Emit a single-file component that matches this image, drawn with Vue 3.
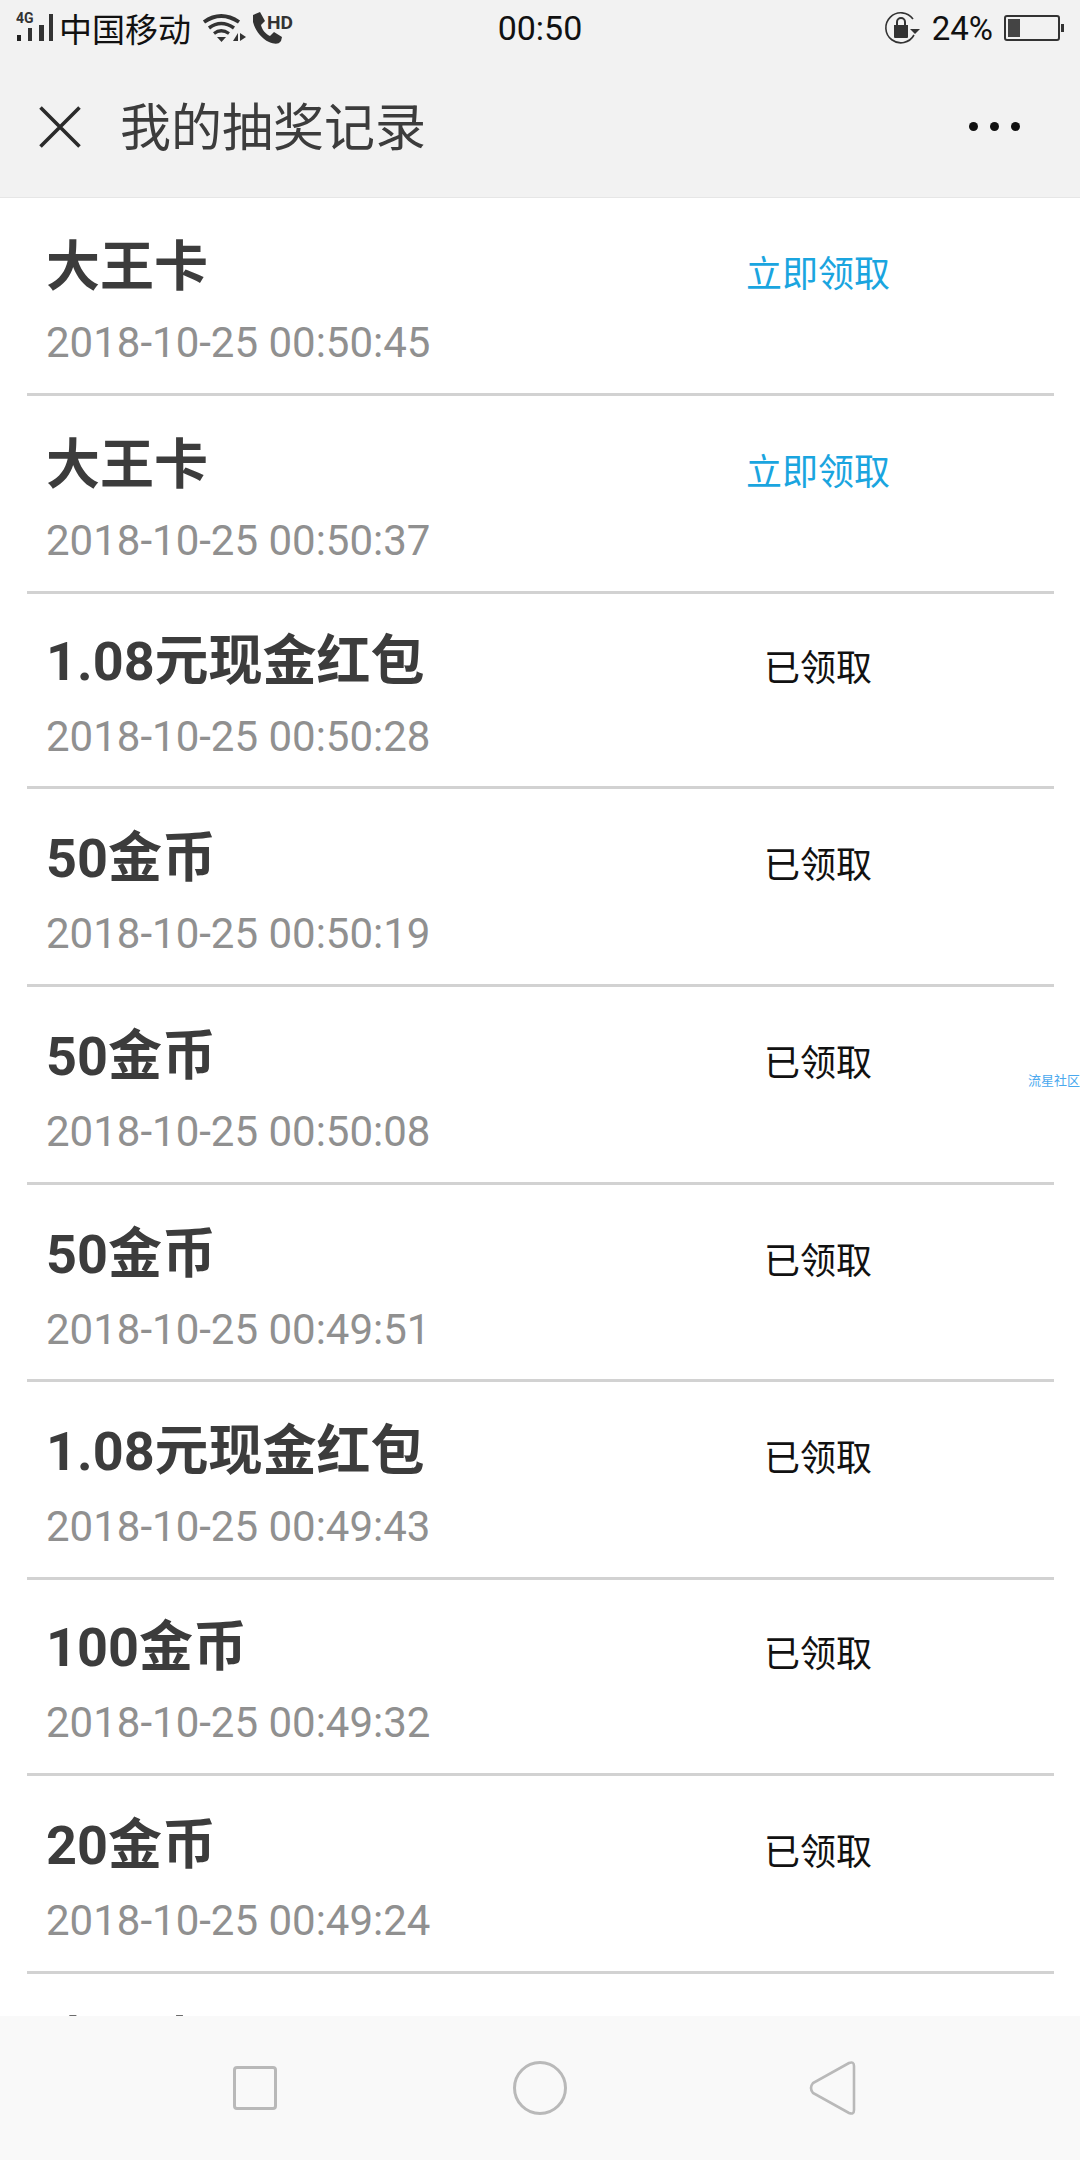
<script setup>
const records = [
  { title: "大王卡", time: "2018-10-25 00:50:45", open: true },
  { title: "大王卡", time: "2018-10-25 00:50:37", open: true },
  { title: "1.08元现金红包", time: "2018-10-25 00:50:28", h: 195 },
  { title: "50金币", time: "2018-10-25 00:50:19" },
  { title: "50金币", time: "2018-10-25 00:50:08" },
  { title: "50金币", time: "2018-10-25 00:49:51", h: 197 },
  { title: "1.08元现金红包", time: "2018-10-25 00:49:43" },
  { title: "100金币", time: "2018-10-25 00:49:32", h: 196 },
  { title: "20金币", time: "2018-10-25 00:49:24" },
  { title: "大王卡", time: "2018-10-25 00:49:15", open: true },
];
</script>

<template>
  <div class="page">
    <div class="top">
      <div class="status">
        <div class="status__left">
          <svg class="ico-signal" width="40" height="34" viewBox="0 0 40 34">
            <text x="0" y="12" font-size="14" font-weight="700" font-family="Roboto, sans-serif" fill="#333">4G</text>
            <rect x="1" y="24" width="4" height="6" fill="#222" />
            <rect x="12" y="17" width="4" height="13" fill="#333" />
            <rect x="23" y="14" width="5" height="16" fill="#333" />
            <rect x="33" y="3" width="4" height="27" fill="#333" />
          </svg>
          <span class="carrier">中国移动</span>
          <svg class="ico-wifi" width="46" height="30" viewBox="0 0 46 30">
            <path d="M2 9 Q19 -3 37 9" fill="none" stroke="#333" stroke-width="3.8" />
            <path d="M7 15 Q19 6 32 15" fill="none" stroke="#333" stroke-width="3.6" />
            <path d="M12 20.5 Q19 15 27 20.5" fill="none" stroke="#333" stroke-width="3.2" />
            <path d="M15 24 L24 24 L19.5 29 Z" fill="#333" />
            <path d="M31 28 L36 20 L36 28 Z M38 20 L38 28 L44 24 Z" fill="#333" />
          </svg>
          <svg class="ico-call" width="44" height="32" viewBox="0 0 44 32">
            <path d="M1 3 L8 0 L13 9 L9 13 C10 18 14 22 18 24 L22 20 L30 25 L29 29 C26 33 22 32 17 30 C9 26 3 18 1 10 Z" fill="#333" />
            <text x="15" y="17" font-size="19" font-weight="700" font-family="Roboto, sans-serif" textLength="26" lengthAdjust="spacingAndGlyphs" fill="#333">HD</text>
          </svg>
        </div>
        <div class="status__time">00:50</div>
        <div class="status__right">
          <svg class="ico-lock" width="38" height="34" viewBox="0 0 38 34">
            <path d="M30 8 A15 15 0 1 0 31 24" fill="none" stroke="#333" stroke-width="1.6" />
            <path d="M11 14 h14 v12 a1 1 0 0 1 -1 1 h-12 a1 1 0 0 1 -1 -1 Z" fill="#333" />
            <path d="M14 14 v-3 a4 4 0 0 1 8 0 v3" fill="none" stroke="#333" stroke-width="2" />
            <path d="M27 18 L37 18 L32 23 Z" fill="#333" />
          </svg>
          <span class="battery-pct">24%</span>
          <div class="battery">
            <div class="battery__fill"></div>
          </div>
          <span class="battery__tip"></span>
        </div>
      </div>

      <div class="nav">
        <svg class="nav__close" width="42" height="42" viewBox="0 0 42 42">
          <path d="M1.5 1.5 L40.5 40.5 M40.5 1.5 L1.5 40.5" stroke="#2b2b2b" stroke-width="3.6" />
        </svg>
        <h1 class="nav__title">我的抽奖记录</h1>
        <div class="nav__more">
          <i></i><i></i><i></i>
        </div>
      </div>
    </div>

    <div class="list">
      <div
        v-for="(rec, i) in records"
        :key="i"
        class="row"
        :class="{ 'row--short': rec.h && rec.h < 197 }"
        :style="{ height: (rec.h || 198) + 'px' }"
      >
        <div class="row__main">
          <div class="row__title">{{ rec.title }}</div>
          <div class="row__time">{{ rec.time }}</div>
        </div>
        <div class="row__action" :class="{ 'row__action--open': rec.open }">
          {{ rec.open ? "立即领取" : "已领取" }}
        </div>
      </div>
      <span class="watermark">流星社区</span>
    </div>

    <div class="softkeys">
      <span class="key-square"></span>
      <span class="key-circle"></span>
      <svg class="key-back" width="48" height="56" viewBox="0 0 48 56">
        <path d="M41 3 Q46 1 46 6 L46 50 Q46 55 41 53 L5 33 Q1 28 5 23 Z" fill="none" stroke="#b9b9b9" stroke-width="2.6" />
      </svg>
    </div>
  </div>
</template>

<style scoped>
.page {
  width: 1080px;
  height: 2160px;
  display: flex;
  flex-direction: column;
  overflow: hidden;
  background: #fff;
  font-family: "Noto Sans CJK SC", sans-serif;
}

.top {
  background: #f2f2f2;
  border-bottom: 1px solid #e6e6e6;
  height: 198px;
  box-sizing: border-box;
  flex: none;
}

.status {
  height: 56px;
  display: grid;
  grid-template-columns: 1fr auto 1fr;
  align-items: center;
  color: #111;
}

.status__left {
  display: flex;
  align-items: center;
  padding-left: 16px;
}

.carrier {
  font-size: 33px;
  line-height: 40px;
  margin-left: 3px;
}

.ico-wifi {
  margin-left: 11px;
}

.ico-call {
  margin-left: 4px;
}

.status__time {
  font-family: Roboto, sans-serif;
  font-size: 34px;
}

.status__right {
  display: flex;
  align-items: center;
  justify-content: flex-end;
  padding-right: 16px;
}

.ico-lock {
  margin-right: 1px;
}

.battery-pct {
  font-family: Roboto, sans-serif;
  font-size: 33px;
  margin-left: 10px;
}

.battery {
  width: 56px;
  height: 26px;
  margin-left: 11px;
  box-sizing: border-box;
  border: 2px solid #333;
  border-radius: 3px;
  padding: 2px;
}

.battery__fill {
  width: 12px;
  height: 100%;
  background: #444;
}

.battery__tip {
  width: 3px;
  height: 8px;
  background: #333;
  margin-left: 1px;
}

.nav {
  height: 141px;
  display: flex;
  align-items: center;
  padding: 0 60px 0 39px;
}

.nav__title {
  flex: 1;
  margin: 0 0 0 39px;
  font-size: 51px;
  font-weight: 400;
  color: #3c3c3c;
  line-height: 70px;
  position: relative;
  top: -3px;
}

.nav__more {
  display: flex;
  gap: 12px;
}

.nav__more i {
  width: 9px;
  height: 9px;
  border-radius: 50%;
  background: #111;
}

.list {
  position: relative;
  flex: 1;
  min-height: 0;
  overflow: hidden;
}

.row {
  box-sizing: border-box;
  margin: 0 26px 0 27px;
  padding-left: 19px;
  border-bottom: 3px solid #d2d2d2;
  display: flex;
  align-items: flex-start;
}

.row__main {
  flex: 1;
  padding-top: 35px;
}

.row--short .row__main {
  padding-top: 33px;
}

.row__title {
  font-family: Roboto, "Noto Sans CJK SC", sans-serif;
  font-size: 54px;
  font-weight: 700;
  line-height: 70px;
  color: #3c3c3c;
}

.row__time {
  font-family: Roboto, sans-serif;
  font-size: 42px;
  line-height: 52px;
  margin-top: 14px;
  color: #909090;
}

.row__action {
  width: 240px;
  margin-right: 116px;
  padding-top: 47px;
  text-align: center;
  font-size: 36px;
  line-height: 52px;
  color: #111;
}

.row--short .row__action {
  padding-top: 45px;
}

.row__action--open {
  color: #1aa5df;
}

.watermark {
  position: absolute;
  right: 0;
  top: 874px;
  font-size: 13px;
  line-height: 16px;
  color: #4aa8ee;
}

.softkeys {
  flex: none;
  height: 144px;
  background: #f9f9f9;
  display: flex;
  align-items: center;
  padding-left: 233px;
}

.key-square {
  width: 44px;
  height: 44px;
  box-sizing: border-box;
  border: 3px solid #b9b9b9;
  border-radius: 4px;
}

.key-circle {
  width: 54px;
  height: 54px;
  box-sizing: border-box;
  border: 3px solid #b9b9b9;
  border-radius: 50%;
  margin-left: 236px;
}

.key-back {
  margin-left: 241px;
}
</style>
